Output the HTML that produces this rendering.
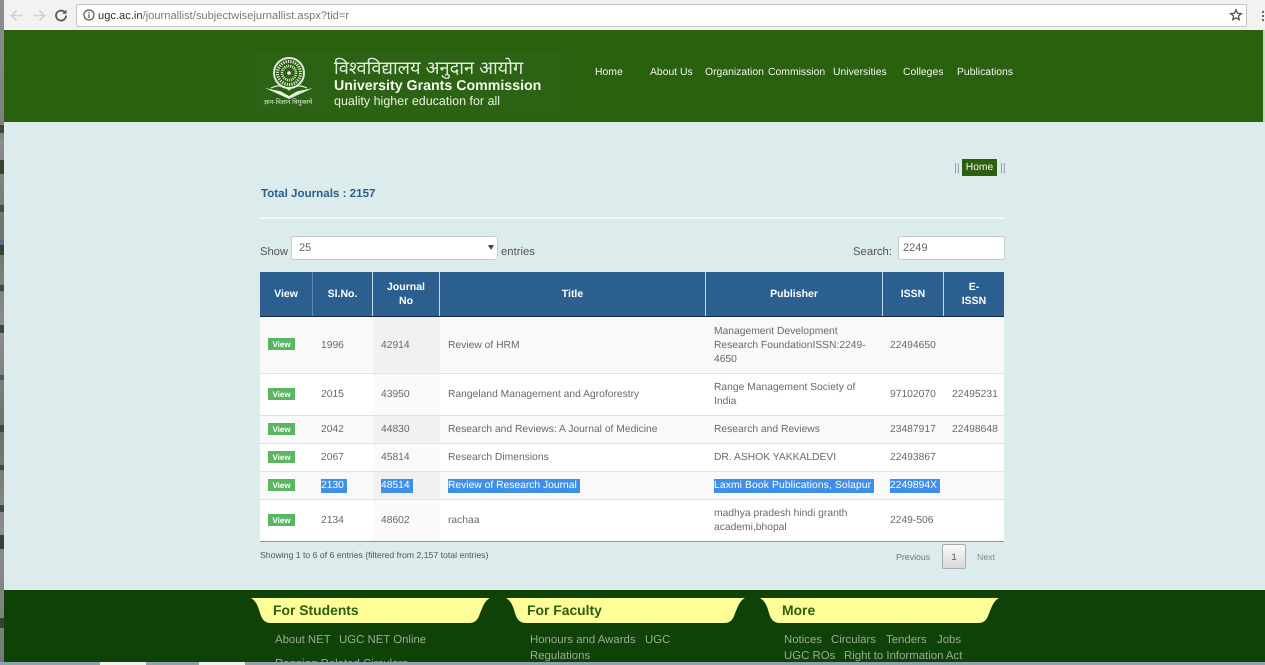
<!DOCTYPE html>
<html lang="en">
<head>
<meta charset="utf-8">
<title>UGC Journal List</title>
<style>
html,body{margin:0;padding:0;width:1265px;height:665px;overflow:hidden;background:#dcebec;font-family:"Liberation Sans",Arial,sans-serif;text-rendering:geometricPrecision}
#p{position:relative;width:1265px;height:665px;overflow:hidden}
.a{position:absolute;white-space:nowrap}
.b{position:absolute}
.t{color:#6a6a6a;font-size:10.3px;line-height:14px;position:absolute;white-space:nowrap;margin-top:1px}
.h{color:#fff;font-size:10.5px;font-weight:bold;line-height:14px;position:absolute;text-align:center;margin-top:1px}
.n{color:#eef3e8;font-size:10.4px;position:absolute;top:66px;line-height:14px;white-space:nowrap}
.v{position:absolute;left:268px;width:27px;height:12px;background:#5cb563;color:#fff;font-size:8px;font-weight:bold;line-height:13px;text-align:center}
.s{background:#3f8fe8;color:#fff;padding-right:3px}
.f{color:#9aa994;font-size:11.4px;line-height:16px;position:absolute;white-space:nowrap;margin-top:1px}
.ft{color:#2c6010;font-size:13.9px;font-weight:bold;position:absolute;top:602px;line-height:16px;white-space:nowrap}
</style>
</head>
<body>
<div id="p">
<!-- browser chrome -->
<div class="b" style="left:0;top:0;width:1265px;height:30px;background:#f2f2f2"></div>
<div class="b" style="left:76px;top:4px;width:1169px;height:21px;background:#fff;border:1px solid #c4c4c4;border-radius:2px"></div>
<svg class="b" style="left:8px;top:7px" width="60" height="17" viewBox="0 0 60 17" fill="none">
<path d="M15 8.500H4M8.500 3.500L3.500 8.500L8.500 13.500" stroke="#d2d2d2" stroke-width="1.600"/>
<path d="M25 8.500H36M31.500 3.500L36.500 8.500L31.500 13.500" stroke="#d2d2d2" stroke-width="1.600"/>
<path d="M58 8.500A5 5 0 1 1 56.500 5" stroke="#5a5a5a" stroke-width="1.800"/>
<path d="M58.500 2.500V6.800H54.200Z" fill="#5a5a5a"/>
</svg>
<svg class="b" style="left:82px;top:8px" width="14" height="14" viewBox="0 0 14 14" fill="none">
<circle cx="7" cy="7" r="5" stroke="#555" stroke-width="1.200"/>
<path d="M7 6.200V10M7 4V5.200" stroke="#555" stroke-width="1.200"/>
</svg>
<div class="a" style="left:98px;top:9px;font-size:11.15px;line-height:14px;color:#7a7a7a"><span style="color:#333">ugc.ac.in</span>/journallist/subjectwisejurnallist.aspx?tid=r</div>
<svg class="b" style="left:1229px;top:8px" width="14" height="14" viewBox="0 0 14 14" fill="none">
<path d="M7 1.800L8.500 5.300L12.300 5.600L9.400 8.100L10.300 11.800L7 9.800L3.700 11.800L4.600 8.100L1.700 5.600L5.500 5.300Z" stroke="#555" stroke-width="1.300"/>
</svg>
<div class="b" style="left:1262px;top:11px;width:2px;height:2px;background:#666;box-shadow:0 4px #666,0 8px #666"></div>

<!-- left strip -->
<div class="b" style="left:0;top:0;width:4px;height:665px;background:linear-gradient(#8e8e8e 0,#7e7e7e 20%,#8d8d8d 21%,#6d736d 35%,#8d8d8d 50%,#6a706a 65%,#8d8d8d 80%,#757a75 100%)"></div>
<div class="b" style="left:0;top:125px;width:4px;height:8px;background:#3f4a3a"></div>
<div class="b" style="left:0;top:160px;width:4px;height:14px;background:#37422f"></div>
<div class="b" style="left:0;top:205px;width:4px;height:7px;background:#434f40"></div>
<div class="b" style="left:0;top:240px;width:4px;height:8px;background:#5c6a80"></div>
<div class="b" style="left:0;top:245px;width:4px;height:10px;background:#37422f"></div>
<div class="b" style="left:0;top:285px;width:4px;height:6px;background:#3f4a3a"></div>
<div class="b" style="left:0;top:325px;width:4px;height:8px;background:#3f4a3a"></div>
<div class="b" style="left:0;top:375px;width:4px;height:5px;background:#4c5a6a"></div>
<div class="b" style="left:0;top:425px;width:4px;height:7px;background:#3f4a3a"></div>
<div class="b" style="left:0;top:465px;width:4px;height:5px;background:#3f4a3a"></div>
<div class="b" style="left:0;top:505px;width:4px;height:7px;background:#3f4a3a"></div>
<div class="b" style="left:0;top:535px;width:4px;height:14px;background:#37422f"></div>
<div class="b" style="left:0;top:618px;width:4px;height:10px;background:#37422f"></div>

<!-- header -->
<div class="b" style="left:4px;top:30px;width:1261px;height:92px;background:#2a610f"></div>
<div class="b" style="left:250px;top:52px;width:311px;height:60px;background:#2c6213"></div>
<svg class="b" style="left:262px;top:55px" width="54" height="54" viewBox="0 0 54 54" fill="none">
<circle cx="27" cy="18" r="15" stroke="#dfe9d6" stroke-width="2"/>
<circle cx="27" cy="18" r="11.500" stroke="#dfe9d6" stroke-width="3" stroke-dasharray="1.200 1.200"/>
<circle cx="27" cy="18" r="7" stroke="#dfe9d6" stroke-width="2.600" stroke-dasharray="1 1"/>
<circle cx="27" cy="18" r="1.800" fill="#eef3e8"/>
<path d="M3 33L27 38L51 33L27 44Z" fill="#e6eedd"/>
<path d="M15 34L27 37L39 34L27 41Z" fill="#2a610f"/>
<path d="M9 33Q20 28 27 35Q34 28 45 33" stroke="#e6eedd" stroke-width="1.200"/>
</svg>
<div class="a" style="left:264px;top:99px;width:50px;font-size:6.500px;line-height:8px;color:#dfe9d6">ज्ञान-विज्ञान विमुक्तये</div>
<div class="a" style="left:334px;top:55px;font-size:18.2px;line-height:26px;color:#e4ecdc">विश्वविद्यालय अनुदान आयोग</div>
<div class="a" style="left:334px;top:77px;font-size:14.2px;font-weight:bold;line-height:18px;color:#f4f7f0">University Grants Commission</div>
<div class="a" style="left:334px;top:94px;font-size:12.500px;line-height:15px;color:#e9f0e2">quality higher education for all</div>
<span class="n" style="left:595px">Home</span>
<span class="n" style="left:650px">About Us</span>
<span class="n" style="left:705px">Organization</span>
<span class="n" style="left:768px">Commission</span>
<span class="n" style="left:833px">Universities</span>
<span class="n" style="left:903px">Colleges</span>
<span class="n" style="left:957px">Publications</span>

<!-- content bg -->
<div class="b" style="left:4px;top:122px;width:1261px;height:468px;background:#dcebec"></div>
<div class="a" style="left:954px;top:161px;font-size:11px;line-height:14px;color:#8a96a8">||</div>
<div class="b" style="left:962px;top:159px;width:35px;height:17px;background:#2a610f;color:#f2f6ee;font-size:10.300px;line-height:17px;text-align:center">Home</div>
<div class="a" style="left:1000px;top:161px;font-size:11px;line-height:14px;color:#8a96a8">||</div>
<div class="a" style="left:261px;top:187px;font-size:11.6px;font-weight:bold;line-height:14px;color:#2b5f8e">Total Journals : 2157</div>
<div class="b" style="left:260px;top:217px;width:744px;height:2px;background:#f0f7f7"></div>

<div class="a" style="left:260px;top:245px;font-size:11.2px;line-height:14px;color:#555">Show</div>
<div class="b" style="left:291px;top:236px;width:205px;height:22px;background:#fff;border:1px solid #ccc;border-radius:3px"></div>
<div class="a" style="left:299px;top:241px;font-size:11px;line-height:14px;color:#666">25</div>
<div class="b" style="left:488px;top:245px;width:0;height:0;border-left:3px solid transparent;border-right:3px solid transparent;border-top:5px solid #444"></div>
<div class="a" style="left:501px;top:245px;font-size:11.3px;line-height:14px;color:#555">entries</div>
<div class="a" style="left:853px;top:245px;font-size:11.3px;line-height:14px;color:#555">Search:</div>
<div class="b" style="left:898px;top:236px;width:105px;height:22px;background:#fff;border:1px solid #ccc;border-radius:3px"></div>
<div class="a" style="left:903px;top:241px;font-size:11px;line-height:14px;color:#666">2249</div>

<!-- table header -->
<div class="b" style="left:260px;top:272px;width:744px;height:44px;background:#2a5f90"></div>
<div class="b" style="left:260px;top:316px;width:744px;height:1px;background:#16293c"></div>
<div class="b" style="left:312px;top:272px;width:1px;height:44px;background:#5f8bb0"></div>
<div class="b" style="left:372px;top:272px;width:1px;height:44px;background:#c8d8e6"></div>
<div class="b" style="left:439px;top:272px;width:1px;height:44px;background:#c8d8e6"></div>
<div class="b" style="left:705px;top:272px;width:1px;height:44px;background:#c8d8e6"></div>
<div class="b" style="left:882px;top:272px;width:1px;height:44px;background:#c8d8e6"></div>
<div class="b" style="left:943px;top:272px;width:1px;height:44px;background:#c8d8e6"></div>
<div class="h" style="left:260px;top:286px;width:52px">View</div>
<div class="h" style="left:313px;top:286px;width:59px">Sl.No.</div>
<div class="h" style="left:373px;top:279px;width:66px">Journal<br>No</div>
<div class="h" style="left:440px;top:286px;width:265px">Title</div>
<div class="h" style="left:706px;top:286px;width:176px">Publisher</div>
<div class="h" style="left:883px;top:286px;width:60px">ISSN</div>
<div class="h" style="left:944px;top:279px;width:60px">E-<br>ISSN</div>

<!-- rows -->
<div class="b" style="left:260px;top:317px;width:744px;height:56px;background:#f9f9f9"></div>
<div class="b" style="left:260px;top:374px;width:744px;height:41px;background:#fff"></div>
<div class="b" style="left:260px;top:416px;width:744px;height:27px;background:#f9f9f9"></div>
<div class="b" style="left:260px;top:444px;width:744px;height:27px;background:#fff"></div>
<div class="b" style="left:260px;top:472px;width:744px;height:27px;background:#f9f9f9"></div>
<div class="b" style="left:260px;top:500px;width:744px;height:41px;background:#fff"></div>
<div class="b" style="left:373px;top:317px;width:67px;height:56px;background:#f1f1f1"></div>
<div class="b" style="left:373px;top:374px;width:67px;height:41px;background:#fafafa"></div>
<div class="b" style="left:373px;top:416px;width:67px;height:27px;background:#f1f1f1"></div>
<div class="b" style="left:373px;top:444px;width:67px;height:27px;background:#fafafa"></div>
<div class="b" style="left:373px;top:472px;width:67px;height:27px;background:#f1f1f1"></div>
<div class="b" style="left:373px;top:500px;width:67px;height:41px;background:#fafafa"></div>
<div class="b" style="left:260px;top:373px;width:744px;height:1px;background:#e2e2e2"></div>
<div class="b" style="left:260px;top:415px;width:744px;height:1px;background:#dedede"></div>
<div class="b" style="left:260px;top:443px;width:744px;height:1px;background:#e2e2e2"></div>
<div class="b" style="left:260px;top:471px;width:744px;height:1px;background:#e2e2e2"></div>
<div class="b" style="left:260px;top:499px;width:744px;height:1px;background:#e2e2e2"></div>
<div class="b" style="left:260px;top:541px;width:744px;height:1px;background:#8f9698"></div>

<div class="v" style="top:338px">View</div>
<span class="t" style="left:321px;top:338px">1996</span>
<span class="t" style="left:381px;top:338px">42914</span>
<span class="t" style="left:448px;top:338px">Review of HRM</span>
<span class="t" style="left:714px;top:324px">Management Development<br>Research FoundationISSN:2249-<br>4650</span>
<span class="t" style="left:890px;top:338px">22494650</span>

<div class="v" style="top:388px">View</div>
<span class="t" style="left:321px;top:387px">2015</span>
<span class="t" style="left:381px;top:387px">43950</span>
<span class="t" style="left:448px;top:387px">Rangeland Management and Agroforestry</span>
<span class="t" style="left:714px;top:380px">Range Management Society of<br>India</span>
<span class="t" style="left:890px;top:387px">97102070</span>
<span class="t" style="left:952px;top:387px">22495231</span>

<div class="v" style="top:423px">View</div>
<span class="t" style="left:321px;top:422px">2042</span>
<span class="t" style="left:381px;top:422px">44830</span>
<span class="t" style="left:448px;top:422px">Research and Reviews: A Journal of Medicine</span>
<span class="t" style="left:714px;top:422px">Research and Reviews</span>
<span class="t" style="left:890px;top:422px">23487917</span>
<span class="t" style="left:952px;top:422px">22498648</span>

<div class="v" style="top:451px">View</div>
<span class="t" style="left:321px;top:450px">2067</span>
<span class="t" style="left:381px;top:450px">45814</span>
<span class="t" style="left:448px;top:450px">Research Dimensions</span>
<span class="t" style="left:714px;top:450px">DR. ASHOK YAKKALDEVI</span>
<span class="t" style="left:890px;top:450px">22493867</span>

<div class="v" style="top:479px">View</div>
<span class="t s" style="left:321px;top:478px">2130</span>
<span class="t s" style="left:381px;top:478px">48514</span>
<span class="t s" style="left:448px;top:478px">Review of Research Journal</span>
<span class="t s" style="left:714px;top:478px;letter-spacing:.12px">Laxmi Book Publications, Solapur</span>
<span class="t s" style="left:890px;top:478px">2249894X</span>

<div class="v" style="top:514px">View</div>
<span class="t" style="left:321px;top:513px">2134</span>
<span class="t" style="left:381px;top:513px">48602</span>
<span class="t" style="left:448px;top:513px">rachaa</span>
<span class="t" style="left:714px;top:506px">madhya pradesh hindi granth<br>academi,bhopal</span>
<span class="t" style="left:890px;top:513px">2249-506</span>

<div class="a" style="left:260px;top:548px;font-size:8.7px;line-height:14px;color:#555">Showing 1 to 6 of 6 entries (filtered from 2,157 total entries)</div>
<div class="a" style="left:896px;top:550px;font-size:8.8px;line-height:14px;color:#777">Previous</div>
<div class="b" style="left:942px;top:544px;width:22px;height:23px;border:1px solid #aaa;border-radius:2px;background:linear-gradient(#fafafa,#d8d8d8);color:#555;font-size:9.500px;line-height:25px;text-align:center">1</div>
<div class="a" style="left:977px;top:550px;font-size:8.8px;line-height:14px;color:#888">Next</div>

<!-- footer -->
<div class="b" style="left:4px;top:590px;width:1261px;height:72px;background:#0e4207"></div>
<svg class="b" style="left:250px;top:597px" width="750" height="27" viewBox="0 0 750 27" fill="#ffff99">
<path d="M1 1H240C234 4 232 12 229 19C227 24 224 26 219 26H21C15 26 12 23 10 16C8 9 6 4 1 1Z"/>
<path d="M256 1H495C489 4 487 12 484 19C482 24 479 26 474 26H276C270 26 267 23 265 16C263 9 261 4 256 1Z"/>
<path d="M510 1H749C743 4 741 12 738 19C736 24 733 26 728 26H530C524 26 521 23 519 16C517 9 515 4 510 1Z"/>
</svg>
<span class="ft" style="left:273px">For Students</span>
<span class="ft" style="left:527px">For Faculty</span>
<span class="ft" style="left:782px">More</span>

<span class="f" style="left:275px;top:631px">About NET</span>
<span class="f" style="left:339px;top:631px">UGC NET Online</span>
<span class="f" style="left:275px;top:655px">Ragging Related Circulars</span>
<span class="f" style="left:530px;top:631px">Honours and Awards</span>
<span class="f" style="left:645px;top:631px">UGC</span>
<span class="f" style="left:530px;top:647px">Regulations</span>
<span class="f" style="left:784px;top:631px">Notices</span>
<span class="f" style="left:831px;top:631px">Circulars</span>
<span class="f" style="left:886px;top:631px">Tenders</span>
<span class="f" style="left:937px;top:631px">Jobs</span>
<span class="f" style="left:784px;top:647px">UGC ROs</span>
<span class="f" style="left:844px;top:647px">Right to Information Act</span>

<!-- bottom strip -->
<div class="b" style="left:0;top:662px;width:1265px;height:3px;background:#8ea2b0"></div>
<div class="b" style="left:100px;top:662px;width:46px;height:3px;background:#f0f2f2"></div>
<div class="b" style="left:199px;top:662px;width:46px;height:3px;background:#f0f2f2"></div>
<div class="b" style="left:1263px;top:30px;width:2px;height:92px;background:#c8d8c0"></div>
</div>
</body>
</html>
